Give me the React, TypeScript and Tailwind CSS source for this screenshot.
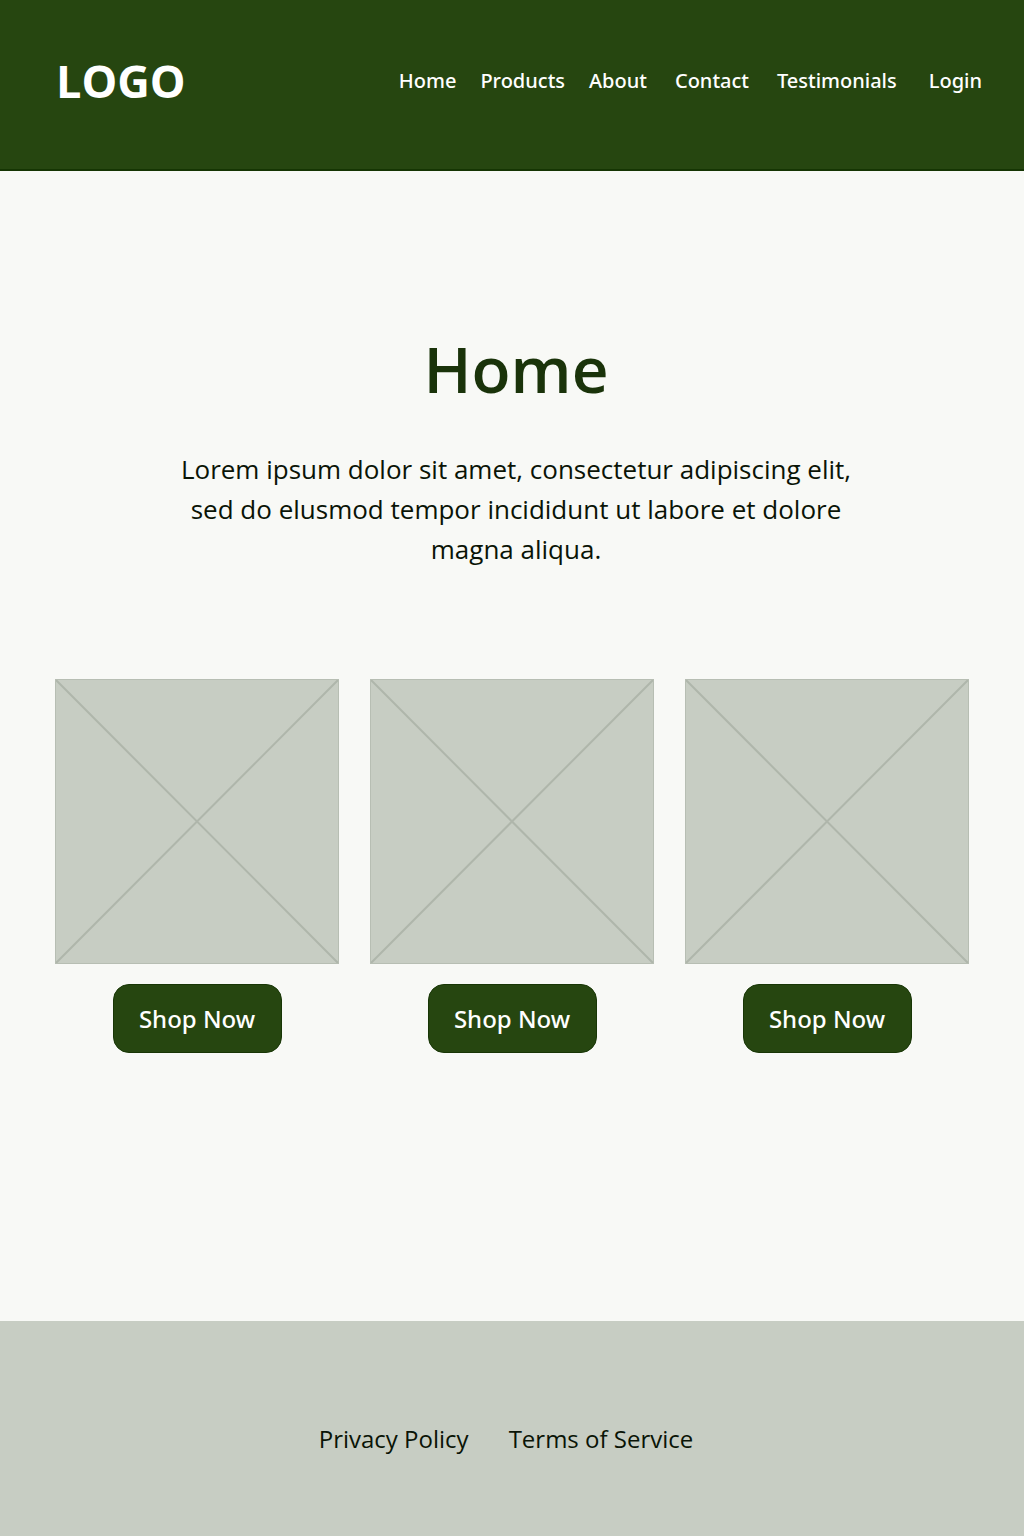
const nav = [
  { label: "Home", gap: "" },
  { label: "Products", gap: "ml-6" },
  { label: "About", gap: "ml-6" },
  { label: "Contact", gap: "ml-7" },
  { label: "Testimonials", gap: "ml-7" },
  { label: "Login", gap: "ml-8" },
];

function Placeholder() {
  return (
    <svg
      viewBox="0 0 284 285"
      preserveAspectRatio="none"
      className="block aspect-[284/285] w-full bg-[#c7cdc3]"
      role="img"
      aria-label="Product"
    >
      <path d="M0 0 284 285M284 0 0 285" stroke="#afb6ab" strokeWidth="2" fill="none" />
      <rect x="0.5" y="0.5" width="283" height="284" stroke="#b7beb3" fill="none" />
    </svg>
  );
}

export default function App() {
  return (
    <div className="flex min-h-screen flex-col bg-[#f8f9f6] font-['Open_Sans',sans-serif] text-[#0a1406]">
      <header className="flex h-[171px] items-center justify-between border-b-2 border-[#153503] bg-[#264610] pr-[42px] pb-2 pl-14 text-white">
        <a href="#" className="text-[45px] leading-none font-bold">LOGO</a>
        <nav className="flex font-['Noto_Sans',sans-serif] text-[20px] font-medium">
          {nav.map((n) => (
            <a key={n.label} href="#" className={n.gap}>{n.label}</a>
          ))}
        </nav>
      </header>
      <main className="flex-1 px-[55px] pt-[158px]">
        <div className="pl-2 text-center">
          <h1 className="text-[64px] leading-[80px] font-semibold text-[#1a330a]">Home</h1>
          <p className="mt-10 text-[26px] leading-10">
            Lorem ipsum dolor sit amet, consectetur adipiscing elit,
            <br />
            sed do elusmod tempor incididunt ut labore et dolore
            <br />
            magna aliqua.
          </p>
        </div>
        <div className="mt-[110px] grid grid-cols-3 gap-[31px]">
          {[0, 1, 2].map((i) => (
            <div key={i} className="flex flex-col items-center">
              <Placeholder />
              <button className="mt-5 h-[69px] min-w-[169px] rounded-2xl border border-[#183606] bg-[#264610] px-5 font-['Noto_Sans',sans-serif] text-[24px] font-medium text-white">
                Shop Now
              </button>
            </div>
          ))}
        </div>
      </main>
      <footer className="flex h-[215px] items-center justify-center gap-10 bg-[#c7cdc3] pt-5 pr-3 text-[24px]">
        <a href="#">Privacy Policy</a>
        <a href="#">Terms of Service</a>
      </footer>
    </div>
  );
}
